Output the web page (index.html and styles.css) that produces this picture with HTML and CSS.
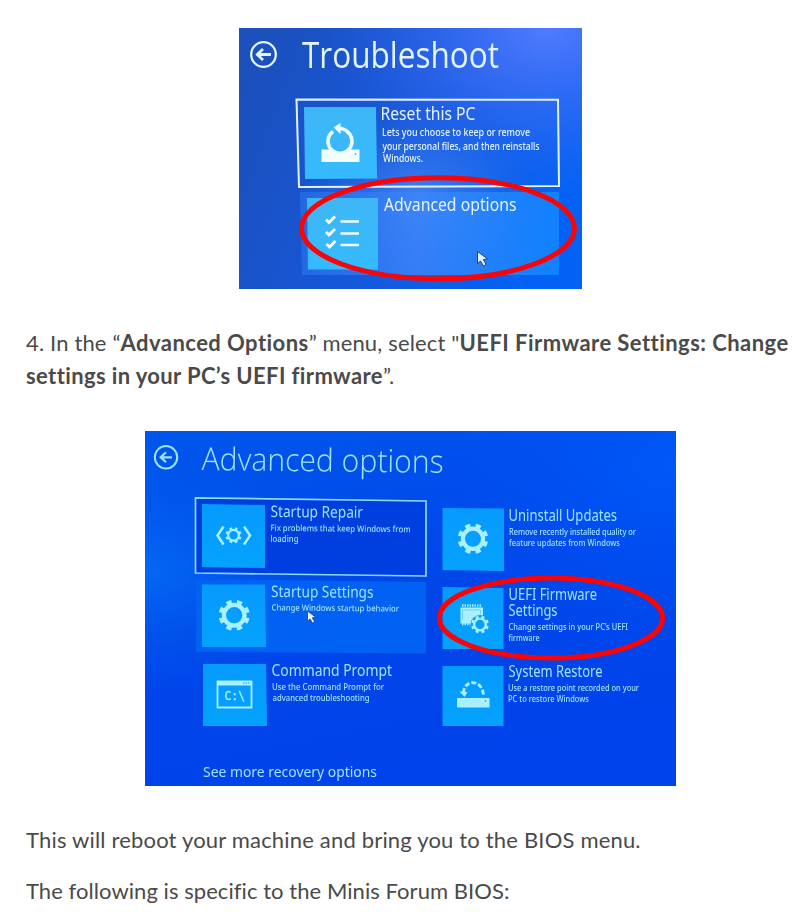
FILE: index.html
```html
<!DOCTYPE html>
<html lang="en">
<head>
<meta charset="utf-8">
<title>UEFI Firmware Settings</title>
<link rel="stylesheet" href="styles.css">
</head>
<body>
<main class="article">
<figure class="photo photo-troubleshoot">
<svg width="343" height="261" viewBox="239 28 343 261" role="img" aria-label="Troubleshoot">
<defs>
<linearGradient id="bg1" x1="0" y1="0.2" x2="1" y2="0.5"><stop offset="0" stop-color="#1c50bb"/><stop offset=".5" stop-color="#1557da"/><stop offset="1" stop-color="#0362f5"/></linearGradient>
<radialGradient id="top1" cx=".9" cy="0" r=".65"><stop offset="0" stop-color="#517bff"/><stop offset="1" stop-color="#3467ee" stop-opacity="0"/></radialGradient>
<radialGradient id="mid1" cx=".52" cy=".66" r=".34"><stop offset="0" stop-color="#5490f8" stop-opacity=".75"/><stop offset="1" stop-color="#347bf0" stop-opacity="0"/></radialGradient>
<linearGradient id="panel1"><stop offset="0" stop-color="#246ee5"/><stop offset=".45" stop-color="#3d85fa"/><stop offset="1" stop-color="#158aff"/></linearGradient>
<linearGradient id="tile1" x2="0" y2="1"><stop offset="0" stop-color="#3fb6f5"/><stop offset="1" stop-color="#35baff"/></linearGradient>
</defs>
<rect x="239" y="28" width="343" height="261" fill="url(#bg1)"/>
<rect x="239" y="28" width="343" height="261" fill="url(#top1)"/>
<rect x="239" y="28" width="343" height="261" fill="url(#mid1)"/>
<g class="soft">
<g class="line-white"><circle cx="263.5" cy="54.5" r="12.3" stroke-width="2.3"/><path d="M271 54.5H257.5M263 49l-5.7 5.5 5.7 5.5" stroke-width="2.8"/></g>
<path d="M296.5 99.5L558 99.7 559 186 299 187Z" fill="none" stroke="#e1f2ff" stroke-width="2"/>
<path d="M304 107H376L377 178.6 305 179Z" fill="url(#tile1)"/>
<path d="M300 192H559V275H302Z" fill="url(#panel1)" opacity=".8"/>
<path d="M307 198H378V269.500H308Z" fill="url(#tile1)"/>
<path d="M321.500 149.500h10.500q8.500 6 17.500 0h10v12.500h-38z" fill="#f1fcff"/>
<path d="M347 131.500A12 12 0 1 1 333 131.500" fill="none" stroke="#f1fcff" stroke-width="3.6"/>
<path d="M333.500 127.500l7-4.500v3.500q4 .5 8 3.500l-2 3q-3-2.500-6-2.700v3.700z" fill="#f1fcff"/><circle cx="355.500" cy="154" r="1" fill="#56baf0"/>
<path d="M326 219.500l3 3 6-6M326 232l3 3 6-6M326.500 244l3 3 6-6" fill="none" stroke="#fff" stroke-width="2.8"/><path d="M340.500 221.500h18.500M340.500 233.500h18.500M340.500 245h18.500" stroke="#f4fdff" stroke-width="2.7"/>
<g class="screen-text screen-text-white">
<text class="heading heading-strong" x="302" y="68" font-size="37" textLength="197" lengthAdjust="spacingAndGlyphs">Troubleshoot</text>
<text x="380.500" y="120.300" font-size="17.500" textLength="95" lengthAdjust="spacingAndGlyphs">Reset this PC</text>
<g class="detail" font-size="10"><text x="382" y="136.300" textLength="148" lengthAdjust="spacingAndGlyphs">Lets you choose to keep or remove</text>
<text x="382.500" y="149.500" textLength="157" lengthAdjust="spacingAndGlyphs">your personal files, and then reinstalls</text>
<text x="383" y="162.300" textLength="40" lengthAdjust="spacingAndGlyphs">Windows.</text></g>
<text x="384" y="211.300" font-size="18" textLength="132.500" lengthAdjust="spacingAndGlyphs">Advanced options</text>
</g>
<path d="M477.500 251.500v12l3-2.500 3 5 2.600-1.500-2.800-5 4.200-.6z" fill="#e8f1ff" stroke="#24427a" stroke-width="1"/>
</g>
<ellipse class="marker" cx="438" cy="228.300" rx="136.500" ry="50.500"/>
</svg>
</figure>

<p class="step"><span class="line line-a">4. In the “<strong>Advanced Options</strong>” menu, select "<strong>UEFI Firmware Settings: Change</strong></span> <span class="line line-b"><strong>settings in your PC’s UEFI firmware</strong>”.</span></p>

<figure class="photo photo-options">
<svg width="531" height="355" viewBox="145 431 531 355" role="img" aria-label="Advanced options">
<defs>
<linearGradient id="bg2" x1="0" y1="0" x2=".3" y2="1"><stop offset="0" stop-color="#0057ec"/><stop offset=".5" stop-color="#0046e8"/><stop offset="1" stop-color="#0043ec"/></linearGradient>
<radialGradient id="left2" cx="0" cy=".39" r=".36"><stop offset="0" stop-color="#0468f2"/><stop offset="1" stop-color="#0058ed" stop-opacity="0"/></radialGradient>
<radialGradient id="right2" cx="1" cy=".1" r=".6"><stop offset="0" stop-color="#0058f8"/><stop offset="1" stop-color="#004cf0" stop-opacity="0"/></radialGradient>
<linearGradient id="tile2" x2="0" y2="1"><stop offset="0" stop-color="#079aff"/><stop offset="1" stop-color="#04a2ff"/></linearGradient>
<g id="gear"><circle r="10.500" fill="none" stroke="#a9f0ff" stroke-width="4.400"/><circle r="13.900" fill="none" stroke="#a9f0ff" stroke-width="4" pathLength="16" stroke-dasharray="1 1" transform="rotate(11.250)"/></g>
</defs>
<rect x="145" y="431" width="531" height="355" fill="url(#bg2)"/>
<rect x="145" y="431" width="531" height="355" fill="url(#left2)"/>
<rect x="145" y="431" width="531" height="355" fill="url(#right2)"/>
<g class="soft">
<g class="line-ice"><circle cx="166" cy="457.300" r="11.200" stroke-width="2"/><path d="M172 457.300H160.500M166 452.300l-5.300 5 5.300 5" stroke-width="2.200"/></g>
<path d="M196 579L426 582V653.500L196 652Z" fill="#0061f2"/>
<path d="M195.500 497.800L426 501V576L195.500 573Z" fill="#003fdf" stroke="#8cd9ff" stroke-width="1.700"/>
<path d="M202 504L265 505V568L202 567Z" fill="url(#tile2)"/>
<path d="M202 584.500H265L266 647H202Z" fill="url(#tile2)"/>
<path d="M203 664H266L267 726H203Z" fill="url(#tile2)"/>
<path d="M442.500 508L504 508.500V571L442.500 570Z" fill="url(#tile2)"/>
<path d="M442.500 587L503.500 588V649H442.500Z" fill="url(#tile2)"/>
<path d="M442.500 666H503.500V726H442.500Z" fill="url(#tile2)"/>
<use href="#gear" transform="translate(233.500 535.300) scale(.51)"/>
<path d="M223.500 526.500l-6 9 6 9M244 526.500l6 9-6 9" fill="none" stroke="#a9f0ff" stroke-width="2.500"/>
<use href="#gear" transform="translate(234.200 615.200) scale(.98)"/>
<use href="#gear" transform="translate(473 538.800) scale(.96)"/>
<path d="M217.500 681.500h34v26h-34z" fill="none" stroke="#a9f0ff" stroke-width="1.800"/><path d="M217 681h35v4.500h-35z" fill="#a9f0ff"/><path d="M243 683h7" stroke="#1b9df0" stroke-dasharray="1.500 1"/>
<text x="224.500" y="700.300" font-family="DejaVu Sans Mono" font-size="12.500" font-weight="400" fill="#a9f0ff" stroke="#a9f0ff" stroke-width=".4" textLength="20.500" lengthAdjust="spacingAndGlyphs">C:\</text>
<path d="M460.500 607.500h22.500v8l-4 2-5 1-3.500 5h-10z" fill="#a9f0ff"/><path d="M462 605.500h20M462 624h9" stroke="#a9f0ff" stroke-width="2.500" stroke-dasharray="1.500 1"/><path d="M462.500 619.500v-9.500h18v4" fill="none" stroke="#57bffa" stroke-width=".7"/>
<circle cx="480" cy="624.500" r="9.500" fill="#069eff"/><use href="#gear" transform="translate(480 624.500) scale(.56)"/>
<path d="M457 698h32.500v9.500H457z" fill="#a9f0ff"/><circle cx="485.500" cy="701" r=".8" fill="#1b9df0"/>
<path d="M463.500 693c0-14 19.500-14.500 20 3" fill="none" stroke="#a9f0ff" stroke-width="2.900" stroke-dasharray="5 2"/><path d="M459.500 691.500l8 .5-3 5z" fill="#a9f0ff"/>
<g class="screen-text screen-text-ice">
<text class="heading" x="201.500" y="470" font-size="31.500" textLength="242" lengthAdjust="spacingAndGlyphs" transform="rotate(.65 202 470)">Advanced options</text>
<g font-size="16">
<text x="270.500" y="517" textLength="92.500" lengthAdjust="spacingAndGlyphs" transform="rotate(.5 271 517)">Startup Repair</text>
<text x="271" y="597" textLength="102.500" lengthAdjust="spacingAndGlyphs" transform="rotate(.4 271 597)">Startup Settings</text>
<text x="271.500" y="676" textLength="120.500" lengthAdjust="spacingAndGlyphs">Command Prompt</text>
<text x="508.500" y="521" textLength="108.500" lengthAdjust="spacingAndGlyphs">Uninstall Updates</text>
<text font-size="15.500"><tspan x="508.500" y="599.800" textLength="88.500" lengthAdjust="spacingAndGlyphs">UEFI Firmware</tspan><tspan x="508.500" y="616.300" textLength="49" lengthAdjust="spacingAndGlyphs">Settings</tspan></text>
<text x="508.500" y="677" textLength="94" lengthAdjust="spacingAndGlyphs">System Restore</text>
</g>
<g class="detail" font-size="8.600">
<text x="270.500" y="530.800" textLength="140" lengthAdjust="spacingAndGlyphs" transform="rotate(.6 271 531)">Fix problems that keep Windows from</text>
<text x="270.500" y="542" textLength="28" lengthAdjust="spacingAndGlyphs">loading</text>
<text x="271.500" y="610.500" textLength="127.500" lengthAdjust="spacingAndGlyphs" transform="rotate(.5 271 611)">Change Windows startup behavior</text>
<text x="272" y="690" textLength="112" lengthAdjust="spacingAndGlyphs">Use the Command Prompt for</text>
<text x="272.500" y="701" textLength="97" lengthAdjust="spacingAndGlyphs">advanced troubleshooting</text>
<text x="509" y="534.800" textLength="127" lengthAdjust="spacingAndGlyphs">Remove recently installed quality or</text>
<text x="509" y="545.800" textLength="111" lengthAdjust="spacingAndGlyphs">feature updates from Windows</text>
<text x="508.500" y="630" textLength="119.500" lengthAdjust="spacingAndGlyphs">Change settings in your PC’s UEFI</text>
<text x="508.500" y="641" textLength="31" lengthAdjust="spacingAndGlyphs">firmware</text>
<text x="508" y="691" textLength="131" lengthAdjust="spacingAndGlyphs">Use a restore point recorded on your</text>
<text x="508" y="702" textLength="81" lengthAdjust="spacingAndGlyphs">PC to restore Windows</text>
</g>
<text x="203" y="776.500" font-size="14" textLength="174" lengthAdjust="spacingAndGlyphs">See more recovery options</text>
</g>
<path d="M307.500 611v10l2.600-2 2.300 4 2.200-1.200-2.300-4 3.500-.6z" fill="#e8f1ff" stroke="#24427a" stroke-width=".8"/>
</g>
<ellipse class="marker" cx="551" cy="618" rx="111.700" ry="40"/>
</svg>
</figure>

<p class="note"><span class="line line-c">This will reboot your machine and bring you to the BIOS menu.</span></p>
<p class="note"><span class="line line-d">The following is specific to the Minis Forum BIOS:</span></p>
</main>
</body>
</html>
```
FILE: styles.css
```css
body {
  margin: 0;
  background: #fff;
  color: #4a4a4a;
  font-family: Lato, "Open Sans", sans-serif;
  font-size: 22px;
  line-height: 33px;
}

.article {
  display: flow-root;
  padding-left: 26px;
  height: 912px;
  box-sizing: border-box;
  overflow: hidden;
}

.photo {
  margin: 0;
}

.photo svg {
  display: block;
}

.photo-troubleshoot {
  margin: 28px 0 37px 213px;
}

.photo-options {
  margin: 39px 0 37px 119px;
}

.step,
.note {
  margin: 0;
}

.note + .note {
  margin-top: 18px;
}

.line {
  display: block;
  white-space: nowrap;
  font-variant-ligatures: none;
}

.line-a {
  letter-spacing: 0.15px;
}

.line-a strong {
  letter-spacing: 0.45px;
}

.line-b {
  letter-spacing: 0.38px;
}

.line-c {
  letter-spacing: 0.18px;
}

.line-d {
  letter-spacing: 0.06px;
}

.soft {
  filter: blur(0.35px);
}

.screen-text {
  font-family: "Noto Sans", "Open Sans", sans-serif;
}

.screen-text-white {
  fill: #e3f3ff;
}

.screen-text-ice {
  fill: #9ee3ff;
}

.heading {
  font-family: "Open Sans", sans-serif;
  font-weight: 300;
}

.heading-strong {
  font-weight: 400;
}

.detail {
  font-weight: 500;
}

.line-white,
.line-ice {
  fill: none;
  stroke: #e3f3ff;
}

.line-ice {
  stroke: #9ee3ff;
}

.marker {
  fill: none;
  stroke: #f80509;
  stroke-width: 5;
}
```
